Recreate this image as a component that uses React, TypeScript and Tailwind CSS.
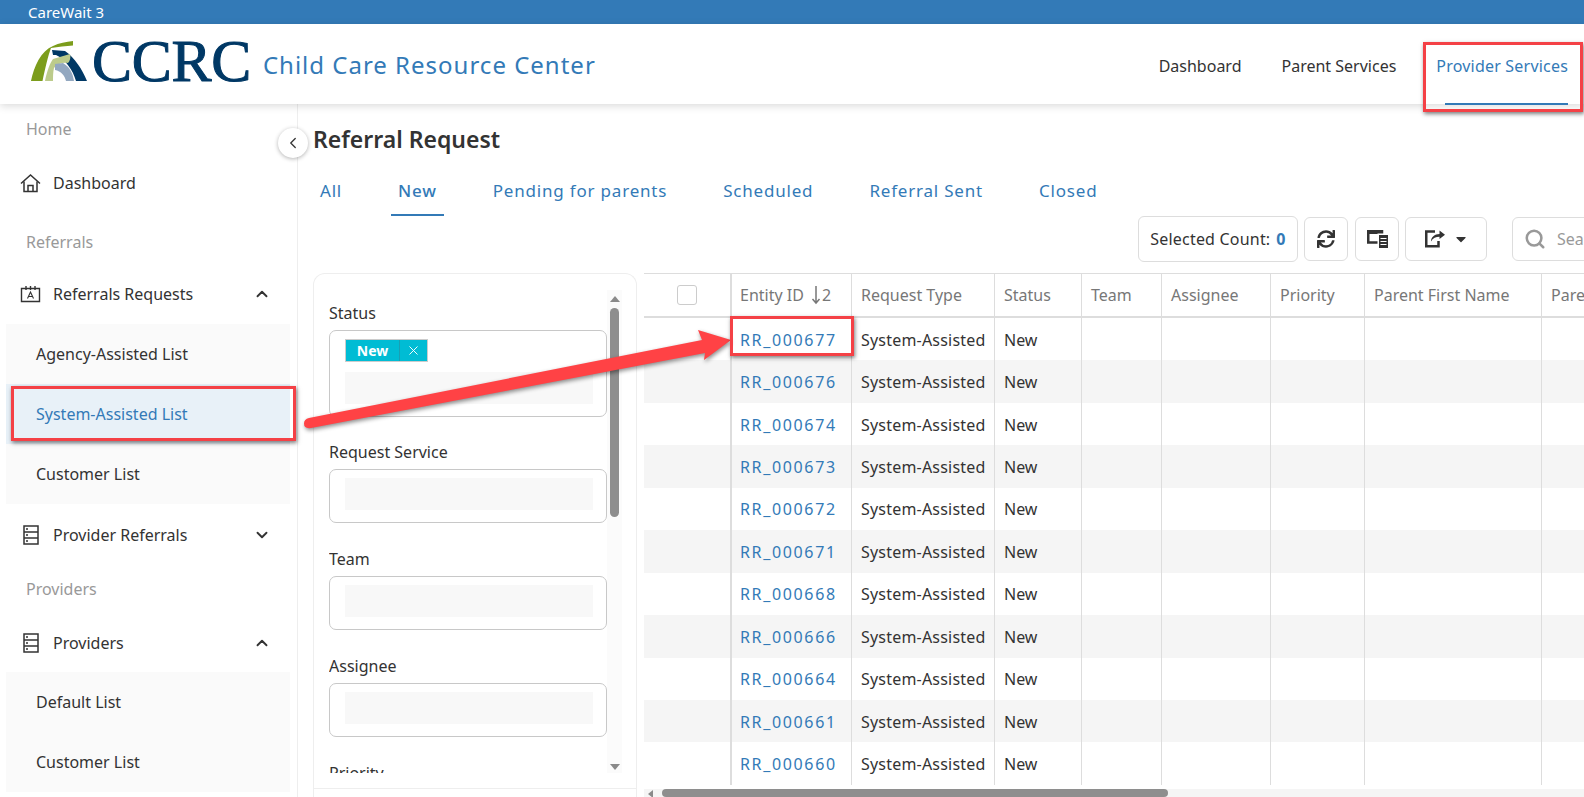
import { ChevronDown, ChevronLeft, ChevronUp, Search, X } from "lucide-react";
import { FaCaretDown, FaSync } from "react-icons/fa";

const columns = ["Team", "Assignee", "Priority", "Parent First Name", "Pare"];
const ids = ["RR_000677", "RR_000676", "RR_000674", "RR_000673", "RR_000672", "RR_000671", "RR_000668", "RR_000666", "RR_000664", "RR_000661", "RR_000660"];
const tabs = ["All", "New", "Pending for parents", "Scheduled", "Referral Sent", "Closed"];
const gridCols = "grid grid-cols-[88px_120px_143px_87px_80px_109px_94px_177px_200px]";

function HomeIcon() {
  return (
    <svg width="21" height="20" viewBox="0 0 21 20" fill="none" stroke="#333" strokeWidth="1.5">
      <path d="M1 10.5 10.5 2 20 10.5" />
      <path d="M4 8.5V18.5H17V8.5" />
      <path d="M8 18.5V12.5H13V18.5" />
    </svg>
  );
}

function CalendarIcon() {
  return (
    <svg width="21" height="20" viewBox="0 0 21 20" fill="none" stroke="#333" strokeWidth="1.4">
      <path d="M1.5 4.5H19.5V17.5H1.5Z" />
      <path d="M6 2V6M10.5 2V6M15 2V6" />
      <path d="M7.5 14.5 10.5 8 13.5 14.5M8.5 12.5H12.5" strokeWidth="1.1" />
    </svg>
  );
}

function ServerIcon() {
  return (
    <svg width="16" height="20" viewBox="0 0 16 20" fill="none" stroke="#333" strokeWidth="1.5">
      <path d="M1 1H15V19H1Z" />
      <path d="M1 7H15M1 13H15" />
      <path d="M3 4H5M3 10H5M3 16H5" />
    </svg>
  );
}

function ColumnsIcon() {
  return (
    <svg width="21" height="18" viewBox="0 0 21 18" fill="none" stroke="#333">
      <path d="M1.25 1.25H15V12.5H1.25Z" strokeWidth="2.5" />
      <path d="M1 2.5H15" strokeWidth="3" />
      <rect x="10.5" y="3.5" width="10.5" height="14.5" fill="#fff" stroke="none" />
      <path d="M12 5H21V18H12Z" fill="#333" stroke="none" />
      <path d="M13.5 8.5H19.5M13.5 11.5H19.5M13.5 14.5H19.5" stroke="#fff" strokeWidth="1.2" />
    </svg>
  );
}

function ExportIcon() {
  return (
    <svg width="21" height="19" viewBox="0 0 21 19" fill="none">
      <path d="M11 2.5H2.25V17.25H14.5V12" stroke="#333" strokeWidth="2.5" />
      <path d="M7 12.5C7 8 10.5 5.2 15.5 5V1.5L21 5.8 15.5 10V7.8C12 7.8 8.8 9 7 12.5Z" fill="#333" />
    </svg>
  );
}

function SortArrow() {
  return (
    <svg width="12" height="20" viewBox="0 0 12 20" fill="none" stroke="#777" strokeWidth="1.5" className="ml-[6px]">
      <path d="M6 1V18M2.5 14 6 18 9.5 14" />
    </svg>
  );
}

function Logo() {
  return (
    <div className="mb-[6px] flex items-center">
      <svg width="60" height="44" viewBox="10 8 60 44">
        <path d="M11 50C14 35 21 20 33 15 39 12 46 11 53 10V14.5C46 15 38 16 31 17 28 25 25 38 22.5 50Z" fill="#7c9d1c" />
        <path d="M32 19 45 20C55 27 62 38 67 50H56C53 39 45 28 36 24L33 24Z" fill="#003865" />
        <path d="M25 50C27 40 30 32 33 28L50 23C51 26 50 30 48 32 42 31 37 33 34 37 33 41 33 46 33 50Z" fill="#bccb8b" />
        <path d="M35 33 43 32C50 36 53 43 54 50H46C45 45 41 40 35 39Z" fill="#93a8c0" />
      </svg>
      <span className="ml-[2px] font-['Liberation_Serif',serif] text-[60px] leading-none tracking-[-0.3px] text-[#003865] [-webkit-text-stroke:1px_#003865]">CCRC</span>
    </div>
  );
}

function SectionLabel({ children, className }: { children: string; className: string }) {
  return <div className={`flex items-center pl-[26px] text-[#999] ${className}`}>{children}</div>;
}

function SideItem({ icon, label, chevron, className }: { icon: React.ReactNode; label: string; chevron?: "up" | "down"; className: string }) {
  return (
    <div className={`flex items-center text-[#333] ${className}`}>
      <div className="flex w-[53px] shrink-0 justify-center pl-[8px]">{icon}</div>
      <span>{label}</span>
      {chevron === "up" && <ChevronUp size={18} strokeWidth={2.5} className="ml-auto mr-[26px]" />}
      {chevron === "down" && <ChevronDown size={18} strokeWidth={2.5} className="ml-auto mr-[26px]" />}
    </div>
  );
}

function SubMenu({ items, active }: { items: string[]; active?: string }) {
  return (
    <div className="mx-[6px] w-[284px] bg-[#fafafa]">
      {items.map((item) => (
        <div key={item} className={`flex h-[60px] items-center pl-[30px] ${item === active ? "bg-[#e8f1f8] text-[#337ab7]" : "text-[#333]"}`}>
          {item}
        </div>
      ))}
    </div>
  );
}

function Field({ label, tag }: { label: string; tag?: boolean }) {
  return (
    <div className={`w-[278px] ${tag ? "mb-[22px]" : "mb-[23px]"}`}>
      <div className="mb-[4px] h-[26px] leading-[26px] text-[#333]">{label}</div>
      <div className="rounded-[7px] border border-[#c8c8c8] pb-[12px] pl-[15px] pr-[13px] pt-[8px]">
        {tag && (
          <div className="mb-[10px] flex h-[23px] w-[83px] items-center border border-[#ccc] bg-[#00bcd4] text-[14px] font-bold text-white">
            <span className="w-[54px] border-r border-[#1a9fb3] text-center leading-[21px]">New</span>
            <X size={15} strokeWidth={1.5} className="ml-[6px]" />
          </div>
        )}
        <div className="h-[32px] bg-[#f8f8f8]" />
      </div>
    </div>
  );
}

function VerticalBar() {
  return (
    <div className="flex h-full w-[15px] shrink-0 flex-col items-center bg-[#fbfbfb] pb-[3px] pt-[6px]">
      <div className="h-0 w-0 border-x-[5px] border-b-[6px] border-x-transparent border-b-[#8a8a8a]" />
      <div className="mt-[6px] h-[209px] w-[9px] rounded-[5px] bg-[#8e8e8e]" />
      <div className="mt-auto h-0 w-0 border-x-[5px] border-t-[6px] border-x-transparent border-t-[#8a8a8a]" />
    </div>
  );
}

function ToolButton({ children, className }: { children: React.ReactNode; className: string }) {
  return <div className={`flex h-[44px] shrink-0 items-center justify-center rounded-[6px] border border-[#ddd] text-[#333] ${className}`}>{children}</div>;
}

export default function App() {
  return (
    <div className="relative flex h-[797px] w-[1584px] flex-col overflow-hidden bg-white font-['Noto_Sans',sans-serif] text-[16px]">
      <div className="h-[24px] shrink-0 bg-[#337ab7] pl-[28px] text-[15px] leading-[24px] text-white">CareWait 3</div>

      <header className="relative z-10 flex h-[80px] shrink-0 items-center bg-white pl-[30px] shadow-[0_2px_8px_rgba(0,0,0,0.15)]">
        <Logo />
        <span className="ml-[12px] mt-[2px] text-[24px] tracking-[1px] text-[#337ab7]">Child Care Resource Center</span>
        <nav className="ml-auto flex h-full items-center text-[#333]">
          <span className="mt-[3px]">Dashboard</span>
          <span className="ml-[40px] mt-[3px]">Parent Services</span>
          <span className="relative ml-[40px] mr-[16px] flex h-full items-center pt-[3px] tracking-[0.2px] text-[#337ab7]">
            Provider Services
            <span className="absolute bottom-[-1px] left-[9px] right-0 h-[2px] bg-[#337ab7]" />
          </span>
        </nav>
      </header>

      <div className="flex min-h-0 flex-1">
        <aside className="w-[298px] shrink-0 border-r border-[#eee]">
          <SectionLabel className="h-[50px]">Home</SectionLabel>
          <SideItem className="h-[58px]" icon={<HomeIcon />} label="Dashboard" />
          <SectionLabel className="h-[58px] pt-[1px]">Referrals</SectionLabel>
          <SideItem className="h-[54px] pb-[6px]" icon={<CalendarIcon />} label="Referrals Requests" chevron="up" />
          <SubMenu items={["Agency-Assisted List", "System-Assisted List", "Customer List"]} active="System-Assisted List" />
          <SideItem className="h-[58px] pt-[3px]" icon={<ServerIcon />} label="Provider Referrals" chevron="down" />
          <SectionLabel className="h-[54px]">Providers</SectionLabel>
          <SideItem className="h-[56px] pb-[2px]" icon={<ServerIcon />} label="Providers" chevron="up" />
          <SubMenu items={["Default List", "Customer List"]} />
        </aside>

        <main className="relative min-w-0 flex-1">
          {/* collapse toggle sits on the sidebar edge */}
          <div className="absolute left-[-20px] top-[24px] flex h-[30px] w-[30px] items-center justify-center rounded-full bg-white text-[#333] shadow-[0_1px_4px_rgba(0,0,0,0.3)]">
            <ChevronLeft size={18} strokeWidth={1.75} />
          </div>

          <h1 className="flex h-[70px] items-center pl-[15px] text-[23px] font-semibold text-[#333]">Referral Request</h1>

          <div className="ml-[15px] flex h-[42px] gap-[42px] text-[17px] tracking-[0.8px] text-[#337ab7]">
            {tabs.map((tab) => (
              <div key={tab} className={`flex items-center whitespace-nowrap px-[7px] pb-[6px] ${tab === "New" ? "border-b-2 border-[#337ab7] font-medium" : "border-b-2 border-transparent"}`}>
                {tab}
              </div>
            ))}
          </div>

          <div className="ml-[840px] flex h-[45px] items-center whitespace-nowrap">
            <ToolButton className="h-[46px] w-[160px] tracking-[0.2px] text-[#333]">
              Selected Count:<span className="ml-[6px] font-bold text-[#337ab7]">0</span>
            </ToolButton>
            <ToolButton className="ml-[6px] w-[44px]"><FaSync size={18} /></ToolButton>
            <ToolButton className="ml-[7px] w-[44px]"><ColumnsIcon /></ToolButton>
            <ToolButton className="ml-[6px] w-[82px] gap-[8px]"><ExportIcon /><FaCaretDown size={16} /></ToolButton>
            <div className="ml-[25px] flex h-[44px] w-[200px] shrink-0 items-center rounded-[6px] border border-[#ddd] pl-[11px] text-[#999]">
              <Search size={22} strokeWidth={2.75} className="text-[#999]" />
              <span className="ml-[11px]">Search</span>
            </div>
          </div>

          <div className="mt-[12px] flex h-[524px] pl-[15px]">
            <section className="flex w-[324px] shrink-0 flex-col rounded-t-[12px] border border-b-0 border-[#eee] pt-[16px]">
              <div className="flex h-[483px] pl-[15px]">
                <div className="h-full overflow-hidden pt-[10px]">
                  <Field label="Status" tag />
                  <Field label="Request Service" />
                  <Field label="Team" />
                  <Field label="Assignee" />
                  <Field label="Priority" />
                </div>
                <VerticalBar />
              </div>
              <div className="mt-[15px] border-t border-[#eee]" />
            </section>

            <div className="ml-[7px] flex min-w-0 flex-1 flex-col overflow-hidden">
              <div className={`${gridCols} h-[45px] border-y border-b-2 border-[#ddd] text-[#777]`}>
                <div className="flex items-center justify-center border-r-2 border-[#ddd]">
                  <div className="h-[20px] w-[20px] rounded-[3px] border border-[#ccc]" />
                </div>
                <div className="flex items-center border-r border-[#ddd] pl-[8px] pt-[1px]">
                  Entity ID<SortArrow />2
                </div>
                <div className="flex items-center border-r border-[#ddd] pl-[9px] pt-[1px]">Request Type</div>
                <div className="flex items-center border-r border-[#ddd] pl-[9px] pt-[1px]">Status</div>
                {columns.map((col) => (
                  <div key={col} className="flex items-center whitespace-nowrap border-r border-[#ddd] pl-[9px] pt-[1px]">{col}</div>
                ))}
              </div>
              {ids.map((id, i) => (
                <div key={id} className={`${gridCols} h-[42.5px] ${i % 2 === 1 ? "bg-[#f5f5f5]" : "bg-white"}`}>
                  <div className="border-r-2 border-[#ddd]" />
                  <div className="flex items-center border-r border-[#ddd] pl-[8px] pt-[1px] tracking-[1.65px] text-[#337ab7]">{id}</div>
                  <div className="flex items-center whitespace-nowrap border-r border-[#ddd] pl-[9px] pt-[1px] tracking-[0.2px] text-[#333]">System-Assisted</div>
                  <div className="flex items-center border-r border-[#ddd] pl-[9px] pt-[1px] text-[#333]">New</div>
                  {columns.map((col) => (
                    <div key={col} className="border-r border-[#ddd]" />
                  ))}
                </div>
              ))}
              <div className="mt-[4px] flex h-[8px] items-start bg-[#f5f5f5] pl-[4px]">
                <div className="mt-[1px] h-0 w-0 border-y-[4px] border-r-[5px] border-y-transparent border-r-[#8a8a8a]" />
                <div className="ml-[9px] h-[8px] w-[506px] rounded-[4px] bg-[#8e8e8e]" />
              </div>
            </div>
          </div>
        </main>
      </div>

      {/* annotations drawn over the screenshot */}
      <svg className="pointer-events-none absolute left-0 top-0 z-20 drop-shadow-[1px_2px_2px_rgba(0,0,0,0.45)]" width="1584" height="797" viewBox="0 0 1584 797">
        <path d="M309 418 702 340 698 330 731 340 704 360 705 353 311 428Q304 429 304 423.5 304 419 309 418Z" fill="#ff4245" />
      </svg>
      <div className="pointer-events-none absolute left-[1423px] top-[42px] z-20 h-[70px] w-[160px] border-[3px] border-[#f44146] shadow-[1px_2px_4px_rgba(0,0,0,0.5)]" />
      <div className="pointer-events-none absolute left-[11px] top-[386px] z-20 h-[55px] w-[285px] border-[3px] border-[#f44146] shadow-[1px_2px_4px_rgba(0,0,0,0.5)]" />
      <div className="pointer-events-none absolute left-[730px] top-[316px] z-20 h-[40px] w-[124px] border-[3px] border-[#f44146] shadow-[1px_2px_4px_rgba(0,0,0,0.5)]" />
    </div>
  );
}
